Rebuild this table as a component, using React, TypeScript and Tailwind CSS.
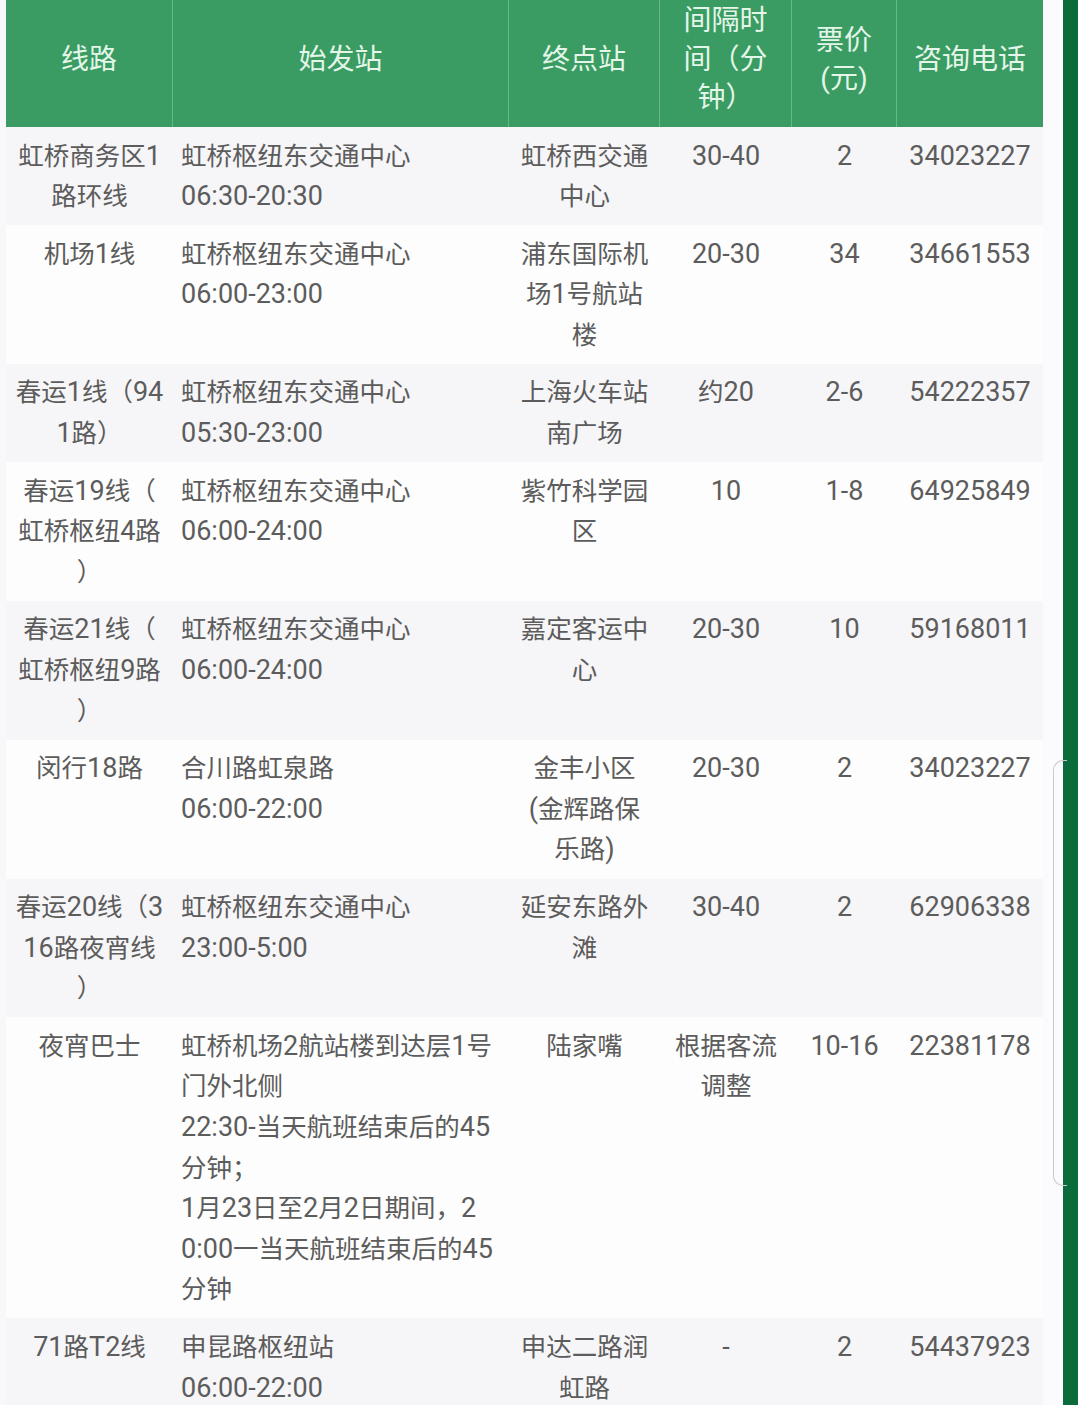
import React from "react";

type Row = {
  line: string[];
  from: string[];
  to: string[];
  gap: string[];
  price: string;
  tel: string;
};

const rows: Row[] = [
  { line: ["虹桥商务区1", "路环线"], from: ["虹桥枢纽东交通中心", "06:30-20:30"], to: ["虹桥西交通", "中心"], gap: ["30-40"], price: "2", tel: "34023227" },
  { line: ["机场1线"], from: ["虹桥枢纽东交通中心", "06:00-23:00"], to: ["浦东国际机", "场1号航站", "楼"], gap: ["20-30"], price: "34", tel: "34661553" },
  { line: ["春运1线（94", "1路）"], from: ["虹桥枢纽东交通中心", "05:30-23:00"], to: ["上海火车站", "南广场"], gap: ["约20"], price: "2-6", tel: "54222357" },
  { line: ["春运19线（", "虹桥枢纽4路", "）"], from: ["虹桥枢纽东交通中心", "06:00-24:00"], to: ["紫竹科学园", "区"], gap: ["10"], price: "1-8", tel: "64925849" },
  { line: ["春运21线（", "虹桥枢纽9路", "）"], from: ["虹桥枢纽东交通中心", "06:00-24:00"], to: ["嘉定客运中", "心"], gap: ["20-30"], price: "10", tel: "59168011" },
  { line: ["闵行18路"], from: ["合川路虹泉路", "06:00-22:00"], to: ["金丰小区", "(金辉路保", "乐路)"], gap: ["20-30"], price: "2", tel: "34023227" },
  { line: ["春运20线（3", "16路夜宵线", "）"], from: ["虹桥枢纽东交通中心", "23:00-5:00"], to: ["延安东路外", "滩"], gap: ["30-40"], price: "2", tel: "62906338" },
  {
    line: ["夜宵巴士"],
    from: [
      "虹桥机场2航站楼到达层1号",
      "门外北侧",
      "22:30-当天航班结束后的45",
      "分钟；",
      "1月23日至2月2日期间，2",
      "0:00一当天航班结束后的45",
      "分钟",
    ],
    to: ["陆家嘴"],
    gap: ["根据客流", "调整"],
    price: "10-16",
    tel: "22381178",
  },
  { line: ["71路T2线"], from: ["申昆路枢纽站", "06:00-22:00"], to: ["申达二路润", "虹路"], gap: ["-"], price: "2", tel: "54437923" },
];

const cols = "grid grid-cols-[167px_336px_151px_132px_105px_146px]";

// latin runs are drawn a little bigger than the CJK glyphs, as on the phone
const Txt = ({ text }: { text: string }) => (
  <>
    {text.split(/([\x20-\x7E]+)/).map((part, i) =>
      /^[\x20-\x7E]+$/.test(part) ? (
        <span key={i} className="text-[27px] leading-none">
          {part}
        </span>
      ) : (
        part
      )
    )}
  </>
);

const Lines = ({ items }: { items: string[] }) => (
  <>
    {items.map((t, i) => (
      <div key={i} className="h-[40.6px] whitespace-nowrap">
        <Txt text={t} />
      </div>
    ))}
  </>
);

const Head = ({ items, last }: { items: string[]; last?: boolean }) => (
  <div
    className={`flex flex-col items-center justify-center pb-[7px] text-center ${last ? "" : "border-r border-[#66b885]"}`}
  >
    {items.map((t, i) => (
      <div key={i} className="whitespace-nowrap">
        {t}
      </div>
    ))}
  </div>
);

export default function App() {
  return (
    <div
      className="relative flex w-[1078px] h-[1405px] overflow-hidden bg-[#f8f7f9]"
      style={{ fontFamily: '"Roboto", "Noto Sans CJK SC", sans-serif' }}
    >
      {/* table */}
      <div className="ml-[6px] w-[1037px] shrink-0">
        <div className={`${cols} h-[127px] bg-[#3a9c62] text-[28px] leading-[38.5px] text-[#e4f6e9]`}>
          <Head items={["线路"]} />
          <Head items={["始发站"]} />
          <Head items={["终点站"]} />
          <Head items={["间隔时", "间（分", "钟）"]} />
          <Head items={["票价", "(元)"]} />
          <Head items={["咨询电话"]} last />
        </div>

        {rows.map((r, i) => (
          <div
            key={i}
            className={`${cols} py-[8.5px] text-[25.5px] leading-[40.6px] text-[#5c5c5c] ${
              i % 2 === 0 ? "bg-[#f6f5f7]" : "bg-[#fdfdfd]"
            }`}
          >
            <div className="flex flex-col items-center text-center">
              <Lines items={r.line} />
            </div>
            <div className="pl-[8px]">
              <Lines items={r.from} />
            </div>
            <div className="flex flex-col items-center text-center">
              <Lines items={r.to} />
            </div>
            <div className="flex flex-col items-center text-center">
              <Lines items={r.gap} />
            </div>
            <div className="text-center">
              <Lines items={[r.price]} />
            </div>
            <div className="text-center">
              <Lines items={[r.tel]} />
            </div>
          </div>
        ))}
      </div>

      {/* right edge */}
      <div className="w-[20px] shrink-0 bg-[#fbfafc]" />
      <div className="flex-1 bg-[#0b6c3b]" />

      {/* scroll thumb outline */}
      <div className="absolute left-[1053px] top-[760px] h-[426px] w-[14px] rounded-l-[10px] border border-r-0 border-[#c9c9cc]" />
    </div>
  );
}
